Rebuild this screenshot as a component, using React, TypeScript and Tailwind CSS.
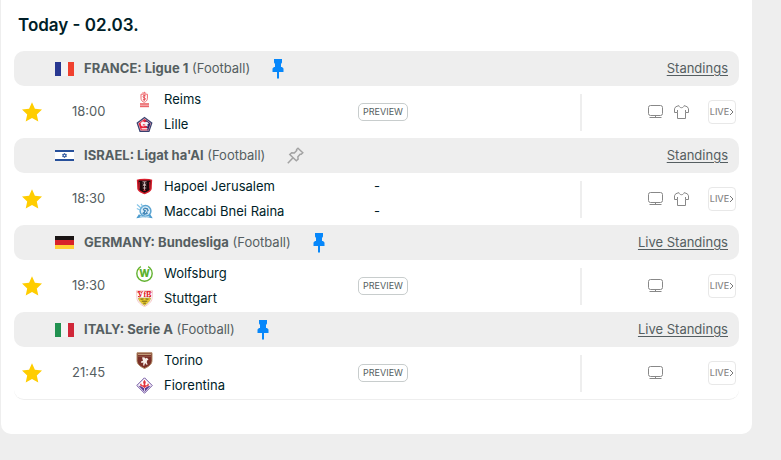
import React from "react";
import clsx from "clsx";

type Team = { name: string; crest: React.ReactNode };

type Match = {
  id: string;
  country: string;
  league: string;
  flag: React.ReactNode;
  pinned: boolean;
  standings: string;
  time: string;
  home: Team;
  away: Team;
  preview: boolean;
  lineups: boolean;
};

/* ---------- Flags ---------- */

const VerticalFlag = ({ colors }: { colors: string[] }) => (
  <svg className="w-[19px] h-[14px] shrink-0" viewBox="0 0 19 14" aria-hidden="true">
    <rect width="7" height="14" fill={colors[0]} />
    <rect x="6" width="7" height="14" fill={colors[1]} />
    <rect x="13" width="6" height="14" fill={colors[2]} />
  </svg>
);

const GermanyFlag = () => (
  <svg className="w-[19px] h-[13px] shrink-0" viewBox="0 0 19 13" aria-hidden="true">
    <rect width="19" height="5" fill="#1a1414" />
    <rect y="4" width="19" height="5" fill="#d8232a" />
    <rect y="9" width="19" height="4" fill="#ffd034" />
  </svg>
);

const IsraelFlag = () => (
  <svg className="w-[19px] h-[11px] shrink-0" viewBox="0 0 19 11" aria-hidden="true">
    <rect width="19" height="11" fill="#fff" />
    <rect width="19" height="2" fill="#27509b" />
    <rect y="9" width="19" height="2" fill="#27509b" />
    <path
      d="M9.5 3.2l2 3.4h-4zM9.5 7.8l-2-3.4h4z"
      fill="none"
      stroke="#27509b"
      strokeWidth="0.8"
    />
  </svg>
);

/* ---------- Club crests ---------- */

const Crest = ({ children }: { children: React.ReactNode }) => (
  <svg className="w-[17px] h-[17px] shrink-0" viewBox="0 0 17 17" aria-hidden="true">
    {children}
  </svg>
);

const ReimsCrest = () => (
  <Crest>
    <path d="M6.2 1.1l1 .8L8.2.6l1 1.3 1-.8-.3 1.5H6.5z" fill="#ee5a5f" />
    <path
      d="M5 3.2h6.4v4c0 2.2-1.4 3.500-3.200 4.100C6.400 10.700 5 9.400 5 7.200z"
      fill="#fff"
      stroke="#ee6a6e"
      strokeWidth="1"
    />
    <path
      d="M9.700 4.900c-1.600-.8-3.200 0-2.700 1.200.4.9 2.400.6 2.500 1.700.1 1-1.500 1.300-2.600.6M8.200 4v5.900"
      fill="none"
      stroke="#e23a42"
      strokeWidth="0.9"
    />
    <rect x="4" y="12" width="9" height="2" fill="#ee8083" />
    <rect x="4" y="14.400" width="9" height="1.800" fill="#ec666b" />
  </Crest>
);

const LilleCrest = () => (
  <Crest>
    <path d="M8.500.8l8 6-3.100 9.200H3.600L.5 6.800z" fill="#39406f" />
    <path d="M8.500 2.300l6.500 5-2.500 7.500h-8L2 7.300z" fill="#e5bfca" />
    <path d="M8.500 3l5.900 4.500-2.300 6.800H4.900L2.600 7.500z" fill="#e8233a" />
    <path d="M9.500 3.800l4.900 3.700-2.300 6.800H11l-.5-5z" fill="#2c2f68" />
    <path d="M4.500 6.900l2.400-1.600 1.700.9 2.400-.5 1.900 1.900-1.600.8.6 2-2.400-.7-2.300.9-1.800-.7z" fill="#f8f0f4" />
    <path d="M7 7.900l2.300.5-.4 1-2.200.1z" fill="#e64b5c" />
    <path d="M5.500 12.800h6" stroke="#fff" strokeWidth="1.200" />
  </Crest>
);

const HapoelCrest = () => (
  <Crest>
    <path
      d="M.8 1.800l3-.8 4.700-.3 4.700.3 3 .8-.5 8.700c-.2 2.600-3 4.300-7.200 5.800-4.200-1.500-7-3.200-7.200-5.800z"
      fill="#d9202e"
    />
    <path d="M2.500 2.500h12l-.4 7.700c-.2 2-2.100 3.200-5.600 4.600-3.500-1.400-5.400-2.600-5.600-4.600z" fill="#1d090c" />
    <path d="M3.400 4v6.800M13.600 4v6.800" stroke="#b51a27" strokeWidth="1" />
    <path
      d="M6.500 3.800h4M6.700 5.800l3.600 2M10.300 5.800l-3.600 2M6.800 10h3.500M8.500 4v8.500"
      stroke="#e0c9c9"
      strokeWidth="0.8"
    />
    <path d="M7.200 12.300h2.600" stroke="#d9202e" strokeWidth="1" />
  </Crest>
);

const RainaCrest = () => (
  <Crest>
    <circle cx="9.500" cy="8" r="5.400" fill="#dceefa" stroke="#5ba4d1" strokeWidth="1.500" />
    <path d="M1 1.500l4.500 4M.8 5.500l3.700 1.700M5 .8l1.800 2.700" stroke="#86c5e8" strokeWidth="1.200" />
    <path d="M6.600 6l2.200-1.600 3 .8 1 2.500-1.700 1 .8 2.300-3.800.9-2-1.700 2-1.800z" fill="#4286b6" />
    <path d="M8.300 6.300l2.600.8-1.600 3" fill="none" stroke="#fff" strokeWidth="0.9" />
    <path d="M.3 15.300l2.600-4c3.300 2 8 2 11.300 0l2.500 4c-4.700-1.500-11.500-1.500-16.400 0z" fill="#4b9bce" />
    <path d="M4 13.300c3 .8 6.300.8 9.300 0" fill="none" stroke="#c9e4f3" strokeWidth="0.8" />
  </Crest>
);

const WolfsburgCrest = () => (
  <Crest>
    <circle cx="8.500" cy="8.500" r="7.700" fill="#fff" stroke="#62b22f" strokeWidth="1.400" />
    <path d="M4.800 0h7.400v2.800H4.800z" fill="#fff" />
    <text
      x="8.500"
      y="12"
      textAnchor="middle"
      fill="#5bb02b"
      className="font-['Inter'] text-[10px] font-extrabold"
    >
      W
    </text>
  </Crest>
);

const StuttgartCrest = () => (
  <Crest>
    <path d="M.5.8h16l-.5 7.700c-.2 3.300-4 6.300-7.500 8.200C5 14.800 1.200 11.800 1 8.500z" fill="#fff" stroke="#eea4a7" strokeWidth="0.6" />
    <text
      x="8.500"
      y="7"
      textAnchor="middle"
      fill="#e1232c"
      className="font-['Liberation_Serif'] text-[8px] font-bold"
    >
      VfB
    </text>
    <path
      d="M1.500 2.300c1.700-1.300 3.300-.3 4.500.2M10.700 2.500c1.200-.8 3-1.600 4.800-.2M2 6.300l2 .7M13 7l2-.7"
      fill="none"
      stroke="#e1232c"
      strokeWidth="1"
    />
    <path d="M2.400 8h12.200c-.3 3-3.100 5.500-6.100 7.400-3-1.900-5.800-4.400-6.100-7.400z" fill="#f0d02c" stroke="#b79d45" strokeWidth="0.7" />
    <path d="M4.500 9.200l3-.2M9.500 9l3 .2M5.700 11.200h5.600M7.300 13.200h2.600" stroke="#6b5d1c" strokeWidth="1" />
  </Crest>
);

const TorinoCrest = () => (
  <Crest>
    <path
      d="M1 .8h15v7.700c0 3.800-3.300 6.100-7.500 8C4.300 14.600 1 12.300 1 8.500z"
      fill="#7a2f28"
      stroke="#b08a64"
      strokeWidth="1"
    />
    <path d="M2 2.300h13" stroke="#d4b98d" strokeWidth="1" />
    <path d="M2 4.300h13" stroke="#a4735b" strokeWidth="0.6" />
    <path
      d="M6 5.600l2.300-.4 1 1.400 1.700-.8 1.500 1.900-1.500.8-.2 2.300 1 1.600-1.300.3-1.400-1.800-.9 2.900-1.100-.2.3-3-2 .3-.4-1.300 2-.8z"
      fill="#f8efe9"
    />
  </Crest>
);

const FiorentinaCrest = () => (
  <Crest>
    <path d="M8.500.8l7.700 7.700-7.700 7.700L.8 8.500z" fill="#fff" stroke="#6a4a9c" strokeWidth="1" />
    <path d="M2.300 8.600l3.200 1 3 2 3-2 3.200-1-6.200 6.300z" fill="#5b3893" />
    <path
      d="M8.500 2.800l1.300 2.300-.7 3.200h2.200l.3-1.800 1.300.4-.4 2-2.600.8-1.400 1.500-1.400-1.500-2.600-.8-.4-2 1.300-.4.3 1.800h2.200l-.8-3.200z"
      fill="#e3303c"
    />
    <path d="M8.500 11.300v3" stroke="#fff" strokeWidth="0.8" />
  </Crest>
);

/* ---------- Icons ---------- */

const StarIcon = () => (
  <svg className="w-5 h-5" viewBox="0 0 20 20" fill="#ffcd00" aria-hidden="true">
    <path d="M10 .2l2.900 6.500 7.100.8-5.200 4.900 1.500 7-6.300-3.500-6.300 3.500 1.500-7L0 7.500l7.100-.8z" />
  </svg>
);

const PinFilledIcon = () => (
  <svg className="w-[12px] h-[20px]" viewBox="0 0 12 20" fill="#0787fa" aria-hidden="true">
    <path d="M2 0h8v3.500L9 5v3h1l1.500 1.500V13H7v6.500H5V13H.5V9.500L2 8h1V5L2 3.500z" />
  </svg>
);

const PinOutlineIcon = () => (
  <svg
    className="w-[17px] h-[17px]"
    viewBox="0 0 17 17"
    fill="none"
    stroke="#a3a3a3"
    strokeWidth="1.500"
    aria-hidden="true"
  >
    <path d="M11 1.200l4.800 4.600-1.600 1.500-1.100-.1-2.200 2.500.2 2.500-1.800 1.600-6.500-6.300 1.900-1.700 2.600.2L9.700 3.500l-.1-1z" />
    <path d="M5.800 10.900L.8 16.200" />
  </svg>
);

const TvIcon = () => (
  <svg className="w-[15px] h-[14px]" viewBox="0 0 15 14" fill="none" stroke="#888" aria-hidden="true">
    <rect x="0.500" y="0.500" width="14" height="10" rx="2" />
    <path d="M7.500 10.500v2M1.500 12.500h12" />
  </svg>
);

const ShirtIcon = () => (
  <svg className="w-[15px] h-[14px]" viewBox="0 0 15 14" fill="none" stroke="#888" aria-hidden="true">
    <path d="M4.800.6L1.700 1.800.5 3.800v3.700h3v6h8v-6h3V3.800l-1.200-2L10.200.6C9.700 2 8.800 2.700 7.500 2.700S5.300 2 4.800.6zM3.500 5v2.500M11.500 5v2.500" />
  </svg>
);

/* ---------- Rows ---------- */

const LeagueHeader = ({ match }: { match: Match }) => (
  <header className="flex items-center h-[35px] pl-[41px] pr-[11px] bg-[#eee] rounded-[10px] text-[13px] text-[#555e61]">
    {match.flag}
    <h3 className="ml-[10px]">
      <span className="font-bold">
        {match.country}: {match.league}
      </span>{" "}
      (Football)
    </h3>
    <button
      type="button"
      aria-label={match.pinned ? "Unpin league" : "Pin league"}
      className="ml-[22px] cursor-pointer"
    >
      {match.pinned ? <PinFilledIcon /> : <PinOutlineIcon />}
    </button>
    <a href="#standings" className="ml-auto underline underline-offset-2">
      {match.standings}
    </a>
  </header>
);

const TeamLine = ({ team, score }: { team: Team; score?: string }) => (
  <div className="flex items-center h-[25px]">
    {team.crest}
    <span className="ml-[11px] w-[210px]">{team.name}</span>
    {score && <span>{score}</span>}
  </div>
);

const MatchRow = ({ match }: { match: Match }) => {
  const score = match.preview ? undefined : "-";
  return (
    <div className="flex items-center h-[52px] pl-2 pr-[3px] text-[13px] text-[#001e28]">
      <button type="button" aria-label="Remove from favourites" className="cursor-pointer">
        <StarIcon />
      </button>
      <time className="ml-[30px] w-16 text-[#555e61]">{match.time}</time>
      <div className={clsx(match.preview ? "w-[222px]" : "w-[272px]")}>
        <TeamLine team={match.home} score={score} />
        <TeamLine team={match.away} score={score} />
      </div>
      {match.preview && (
        <button
          type="button"
          className="w-[50px] h-[18px] border border-[#c8cdcd] rounded-[5px] text-[9px] leading-[16px] text-[#555e61] cursor-pointer"
        >
          PREVIEW
        </button>
      )}
      <div className="ml-auto flex items-center">
        <div className="w-[2px] h-[37px] bg-[#eee]" />
        <div className="ml-[66px] w-[60px] flex items-center gap-[11px]">
          <TvIcon />
          {match.lineups && <ShirtIcon />}
        </div>
        <a
          href="#live"
          className="flex items-center justify-center w-7 h-6 border border-[#e8e8e8] rounded-[4px] text-[9px] font-medium text-[#888]"
        >
          LIVE
          <svg className="w-[5px] h-2" viewBox="0 0 5 8" fill="none" stroke="#777" aria-hidden="true">
            <path d="M1 1l3 3-3 3" />
          </svg>
        </a>
      </div>
    </div>
  );
};

const matches: Match[] = [
  {
    id: "reims-lille",
    country: "FRANCE",
    league: "Ligue 1",
    flag: <VerticalFlag colors={["#283891", "#f4f4f4", "#f0412f"]} />,
    pinned: true,
    standings: "Standings",
    time: "18:00",
    home: { name: "Reims", crest: <ReimsCrest /> },
    away: { name: "Lille", crest: <LilleCrest /> },
    preview: true,
    lineups: true,
  },
  {
    id: "jerusalem-raina",
    country: "ISRAEL",
    league: "Ligat ha'Al",
    flag: <IsraelFlag />,
    pinned: false,
    standings: "Standings",
    time: "18:30",
    home: { name: "Hapoel Jerusalem", crest: <HapoelCrest /> },
    away: { name: "Maccabi Bnei Raina", crest: <RainaCrest /> },
    preview: false,
    lineups: true,
  },
  {
    id: "wolfsburg-stuttgart",
    country: "GERMANY",
    league: "Bundesliga",
    flag: <GermanyFlag />,
    pinned: true,
    standings: "Live Standings",
    time: "19:30",
    home: { name: "Wolfsburg", crest: <WolfsburgCrest /> },
    away: { name: "Stuttgart", crest: <StuttgartCrest /> },
    preview: true,
    lineups: false,
  },
  {
    id: "torino-fiorentina",
    country: "ITALY",
    league: "Serie A",
    flag: <VerticalFlag colors={["#219150", "#f4f4f4", "#d02739"]} />,
    pinned: true,
    standings: "Live Standings",
    time: "21:45",
    home: { name: "Torino", crest: <TorinoCrest /> },
    away: { name: "Fiorentina", crest: <FiorentinaCrest /> },
    preview: true,
    lineups: false,
  },
];

const App = () => {
  return (
    <div className="min-h-screen bg-[#eee] pl-px pr-[29px] font-['Inter','Liberation_Sans',sans-serif]">
      <main className="bg-white rounded-b-[10px] px-[13px] pb-[34px]">
        <h2 className="h-[51px] pt-3 pl-1 text-[17px] leading-[26px] font-semibold text-[#001e28]">
          Today - 02.03.
        </h2>
        <div className="border-b border-[#eee] rounded-b-[10px]">
          {matches.map((match) => (
            <section key={match.id}>
              <LeagueHeader match={match} />
              <MatchRow match={match} />
            </section>
          ))}
        </div>
      </main>
    </div>
  );
};

export default App;
